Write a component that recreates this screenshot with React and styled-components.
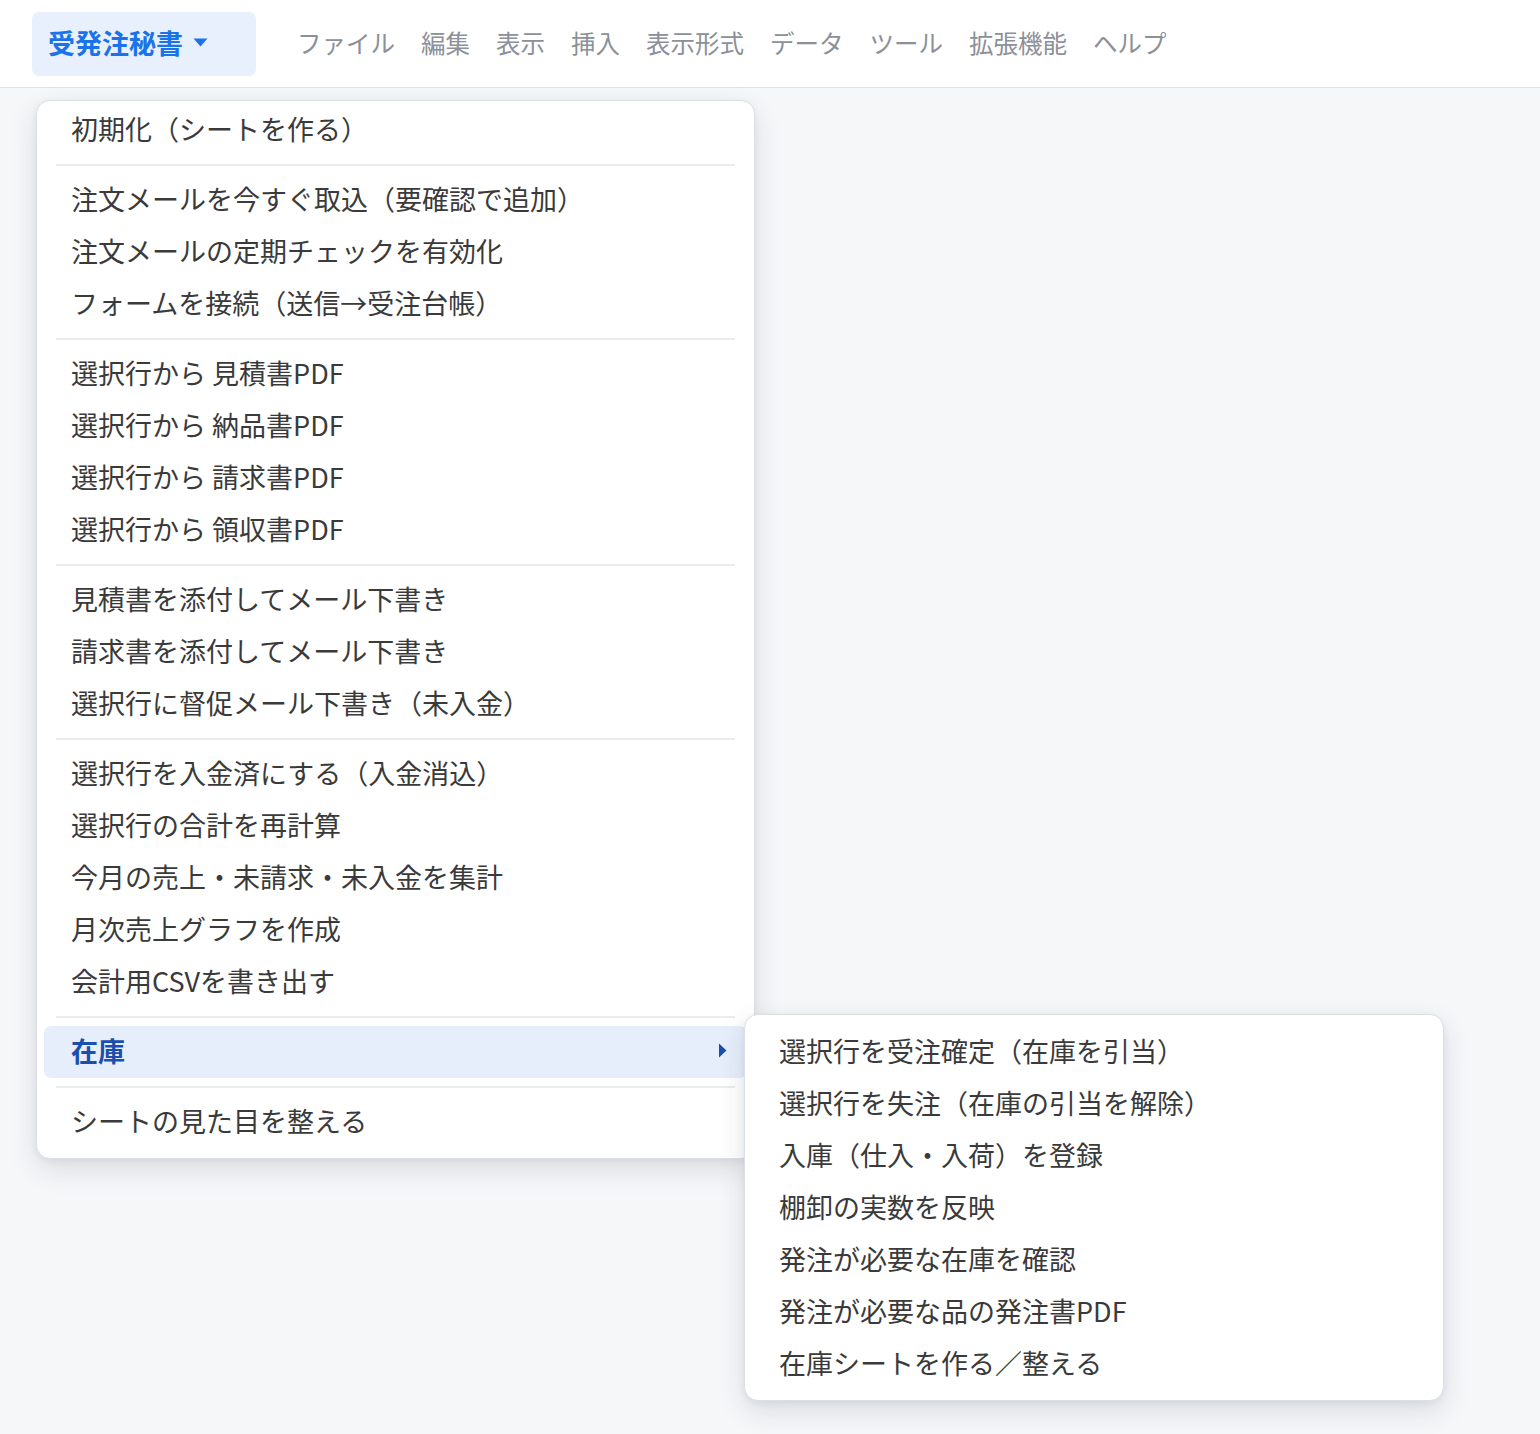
import styled, { createGlobalStyle } from "styled-components";

const GlobalStyle = createGlobalStyle`
  * {
    box-sizing: border-box;
  }

  body {
    margin: 0;
    background: #f6f7f9;
    font-family: "Noto Sans CJK JP", "Noto Sans", sans-serif;
    color: #3a3a3a;
  }
`;

const Page = styled.div`
  min-height: 1434px;
  background: #f6f7f9;
`;

const TopBar = styled.header`
  display: flex;
  align-items: center;
  height: 88px;
  padding-left: 32px;
  background: #fff;
  border-bottom: 1px solid #dfe2e6;
`;

const Brand = styled.button`
  display: flex;
  align-items: center;
  gap: 10px;
  width: 224px;
  height: 64px;
  padding: 0 16px 2px;
  border: none;
  border-radius: 7px;
  background: #e8f0fd;
  color: #1a73e8;
  font-family: inherit;
  font-size: 27px;
  font-weight: 700;
  cursor: pointer;
`;

const MenuBar = styled.nav`
  display: flex;
  gap: 26px;
  margin-left: 41px;
  padding-bottom: 2px;
`;

const MenuBarItem = styled.span`
  font-size: 24.5px;
  color: #8b9099;
`;

const Main = styled.main`
  padding: 12px 0 0 36px;
`;

const Panel = styled.div`
  position: relative;
  width: ${(p) => p.$width}px;
  padding: ${(p) => p.$pad};
  background: #fff;
  border: 1px solid #dcdfe4;
  border-radius: 14px;
  box-shadow: 0 10px 28px rgba(30, 40, 60, 0.13), 0 2px 6px rgba(30, 40, 60, 0.06);
`;

const SubPanel = styled(Panel)`
  position: absolute;
  top: -12px;
  left: calc(100% - 3px);
  z-index: 2;
`;

const Row = styled.div`
  position: relative;
  display: flex;
  align-items: center;
  justify-content: space-between;
  height: 52px;
  padding: 0 20px 3px 27px;
  border-radius: 7px;
  font-size: 27px;
  white-space: nowrap;
  background: ${(p) => (p.$active ? "#e6eefb" : "transparent")};
  color: ${(p) => (p.$active ? "#1b4fad" : "#3a3a3a")};
  font-weight: ${(p) => (p.$active ? 700 : 400)};
`;

const Separator = styled.hr`
  margin: 8px 12px;
  border: none;
  border-top: 2px solid #ececee;
`;

const Caret = () => (
  <svg width="15" height="9" viewBox="0 0 15 9">
    <path d="M0.5 0.5h14L7.5 8.5z" fill="#1a73e8" />
  </svg>
);

const Arrow = () => (
  <svg width="9" height="15" viewBox="0 0 9 15">
    <path d="M1 0.5v14L8.5 7.5z" fill="#1b4fad" />
  </svg>
);

const groups = [
  ["初期化（シートを作る）"],
  [
    "注文メールを今すぐ取込（要確認で追加）",
    "注文メールの定期チェックを有効化",
    "フォームを接続（送信→受注台帳）",
  ],
  [
    "選択行から 見積書PDF",
    "選択行から 納品書PDF",
    "選択行から 請求書PDF",
    "選択行から 領収書PDF",
  ],
  [
    "見積書を添付してメール下書き",
    "請求書を添付してメール下書き",
    "選択行に督促メール下書き（未入金）",
  ],
  [
    "選択行を入金済にする（入金消込）",
    "選択行の合計を再計算",
    "今月の売上・未請求・未入金を集計",
    "月次売上グラフを作成",
    "会計用CSVを書き出す",
  ],
];

const stockItems = [
  "選択行を受注確定（在庫を引当）",
  "選択行を失注（在庫の引当を解除）",
  "入庫（仕入・入荷）を登録",
  "棚卸の実数を反映",
  "発注が必要な在庫を確認",
  "発注が必要な品の発注書PDF",
  "在庫シートを作る／整える",
];

const menus = ["ファイル", "編集", "表示", "挿入", "表示形式", "データ", "ツール", "拡張機能", "ヘルプ"];

export default function App() {
  return (
    <Page>
      <GlobalStyle />
      <TopBar>
        <Brand>
          受発注秘書
          <Caret />
        </Brand>
        <MenuBar>
          {menus.map((m) => (
            <MenuBarItem key={m}>{m}</MenuBarItem>
          ))}
        </MenuBar>
      </TopBar>
      <Main>
        <Panel $width={719} $pad="3px 7px 10px">
          {groups.map((g, i) => (
            <div key={i}>
              {i > 0 && <Separator />}
              {g.map((item) => (
                <Row key={item}>{item}</Row>
              ))}
            </div>
          ))}
          <Separator />
          <Row $active>
            在庫
            <Arrow />
            <SubPanel $width={700} $pad="11px 7px 10px">
              {stockItems.map((item) => (
                <Row key={item}>{item}</Row>
              ))}
            </SubPanel>
          </Row>
          <Separator />
          <Row>シートの見た目を整える</Row>
        </Panel>
      </Main>
    </Page>
  );
}
